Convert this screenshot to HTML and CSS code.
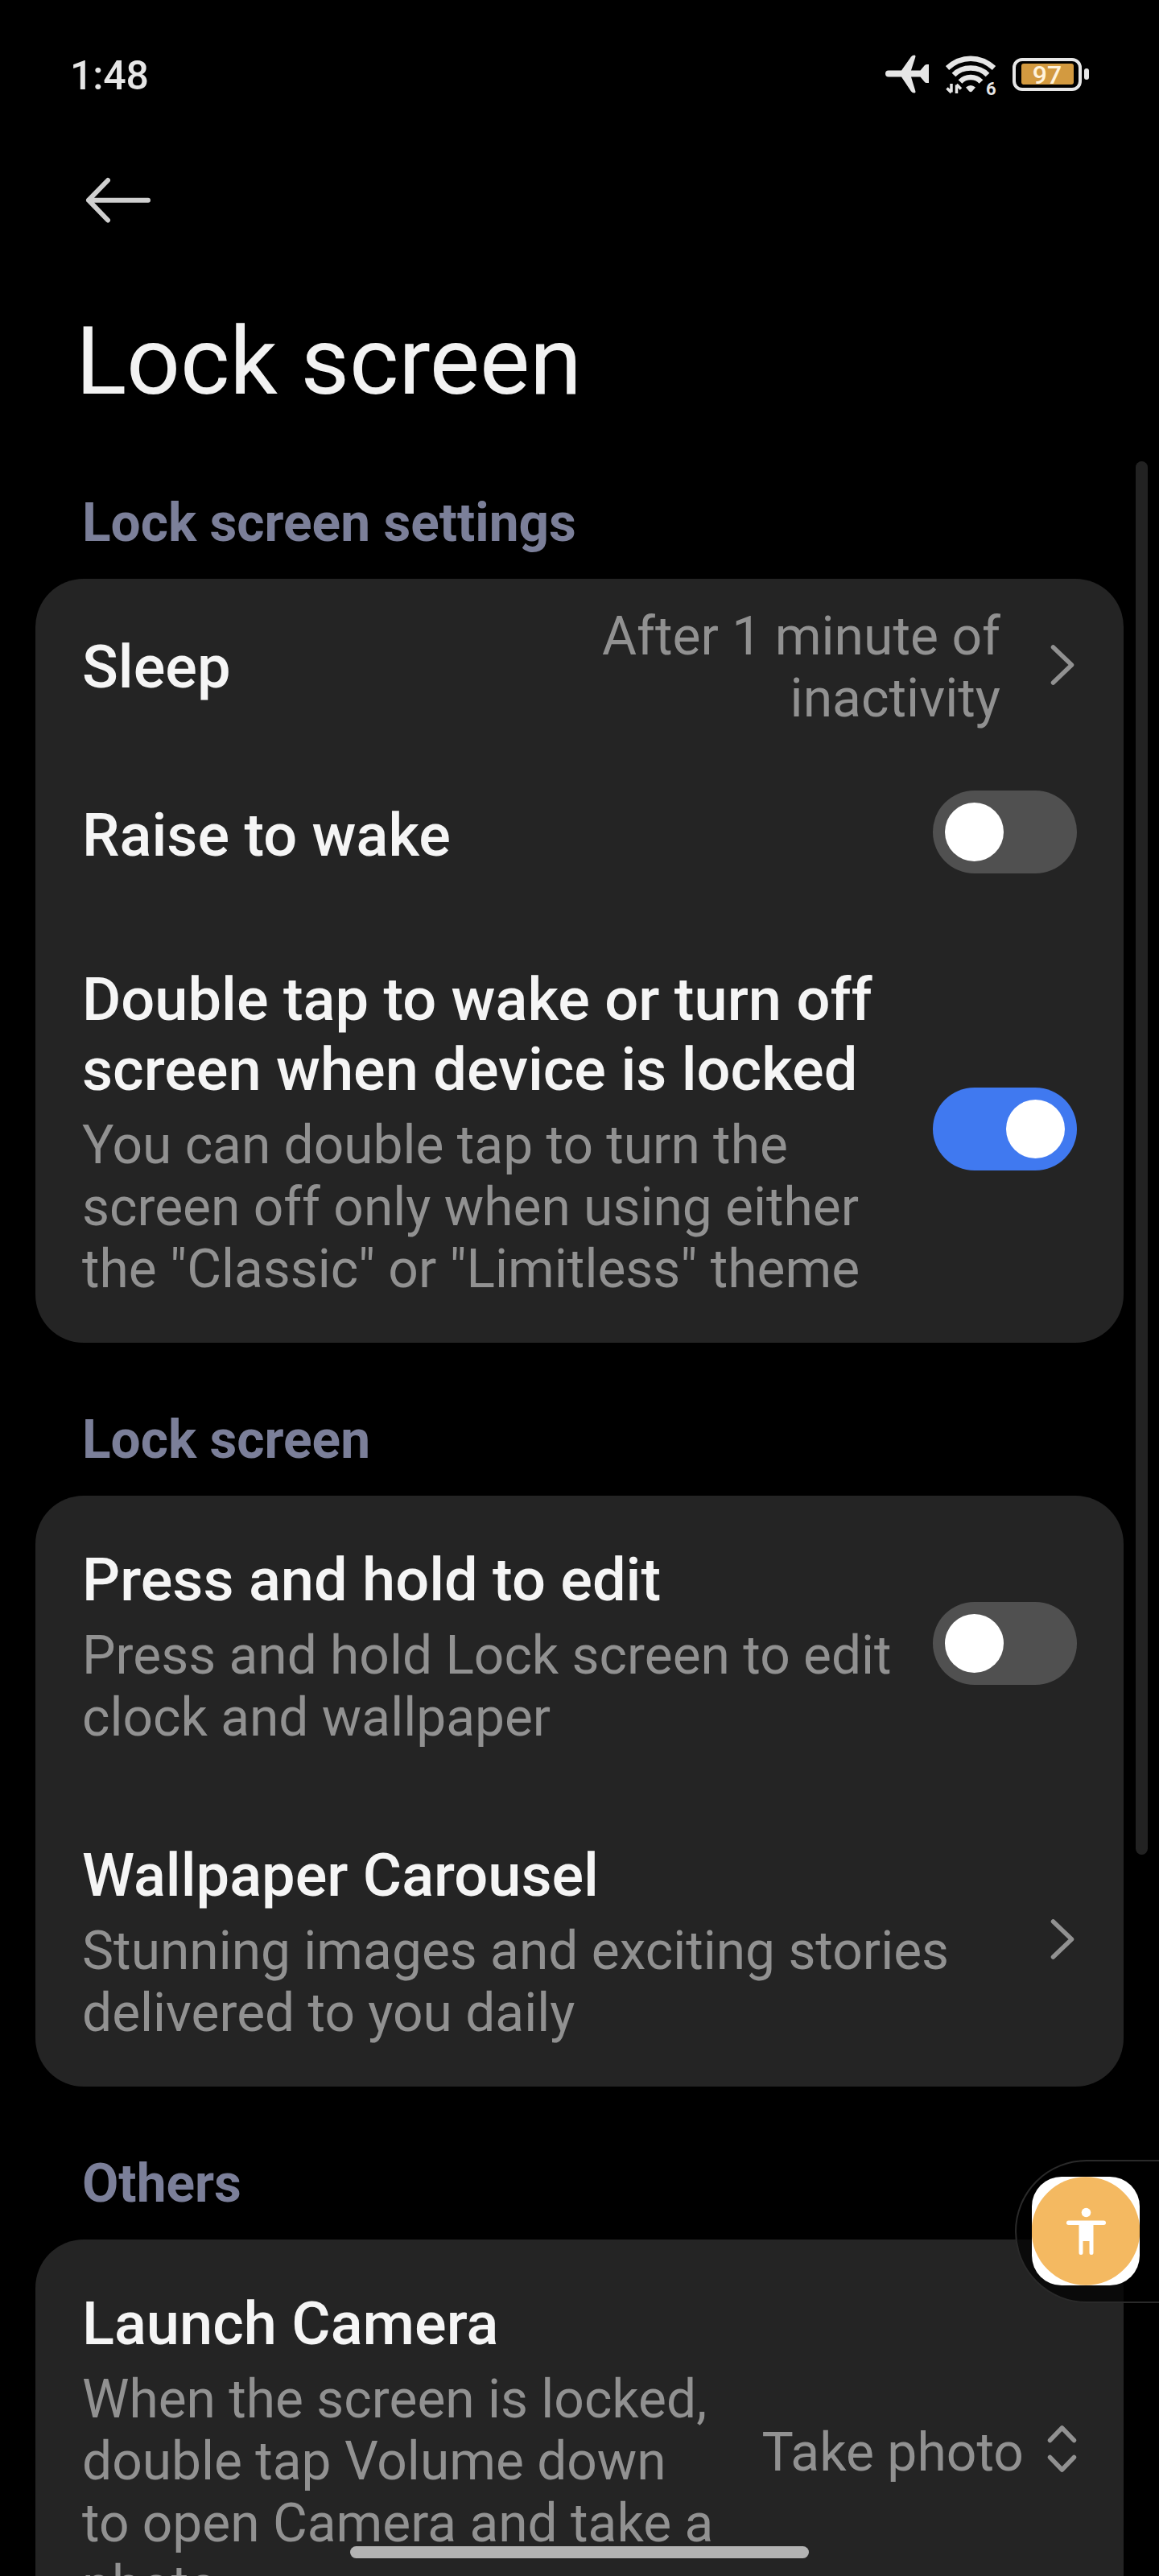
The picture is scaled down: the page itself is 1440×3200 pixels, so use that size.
FILE: index.html
```html
<!DOCTYPE html>
<html lang="en">
  <head>
    <meta charset="UTF-8" />
    <meta name="viewport" content="width=device-width, initial-scale=1.0" />
    <title>Lock screen</title>
    <link rel="stylesheet" href="styles.css">
  </head>
  <body>
    <div class="screen">
      <!-- Status bar -->
      <header class="status-bar">
        <span class="clock">1:48</span>
        <div class="status-icons">
          <svg class="plane" width="54" height="48" viewBox="0 0 54 48" fill="#e6e6e6">
            <path d="M4 19.5H20L32 2.5Q33.5.5 36 .5Q38 .5 37.3 3L32 19.5H43.500L48.500 13.500Q49.500 12 51.500 12H54V35H51.500Q49.500 35 48.500 33.500L43.500 27.500H32L37.300 45Q38 47.500 36 47.500Q33.500 47.500 32 45.500L20 27.500H4A4 4 0 0 1 4 19.500Z" />
          </svg>
          <svg class="wifi" width="64" height="54" viewBox="0 0 64 54">
            <g fill="none" stroke="#e6e6e6" stroke-width="6.500">
              <path d="M2 16.500Q15 4.700 31 4.700T60 16.500" />
              <path d="M10 25Q18 16.500 31 16.500T52 25" />
              <path d="M18 33.500Q23 28 31 28T44 33.500" />
            </g>
            <path d="M25 40.500Q31 35.500 37 40.500L33 45.300Q31 47 29 45.300Z" fill="#e6e6e6" />
            <path d="M7 36V46.500M1.500 41.500L7 47M13.500 48V37.500M19 42.500L13.500 37" fill="none" stroke="#e6e6e6" stroke-width="3.500" />
            <text class="wifi-gen" x="50" y="49.500">6</text>
          </svg>
          <div class="battery">
            <div class="battery-body"><span class="battery-level">97</span></div>
            <i class="battery-tip"></i>
          </div>
        </div>
      </header>

      <!-- Title -->
      <nav class="nav">
        <svg width="82" height="58" viewBox="0 0 82 58" fill="none" stroke="#cfcfcf" stroke-width="6" stroke-linecap="round" stroke-linejoin="round">
          <path d="M29 4L5 28.700L29 53.500M5 28.700H79" />
        </svg>
      </nav>
      <h1 class="page-title">Lock screen</h1>

      <!-- Lock screen settings -->
      <h2 class="section-title">Lock screen settings</h2>
      <section class="card">
        <div class="row row-sleep">
          <h3 class="label">Sleep</h3>
          <p class="value">After 1 minute of<br>inactivity</p>
          <svg class="chevron" width="30" height="52" viewBox="0 0 30 52"><path d="M3.500 4L26.500 26L3.500 48" /></svg>
        </div>
        <div class="row row-single">
          <h3 class="label">Raise to wake</h3>
          <span class="toggle"></span>
        </div>
        <div class="row">
          <div class="text">
            <h3 class="label">Double tap to wake or turn off<br>screen when device is locked</h3>
            <p class="summary">You can double tap to turn the<br>screen off only when using either<br>the "Classic" or "Limitless" theme</p>
          </div>
          <span class="toggle on"></span>
        </div>
      </section>

      <!-- Lock screen -->
      <h2 class="section-title">Lock screen</h2>
      <section class="card">
        <div class="row">
          <div class="text">
            <h3 class="label">Press and hold to edit</h3>
            <p class="summary">Press and hold Lock screen to edit<br>clock and wallpaper</p>
          </div>
          <span class="toggle"></span>
        </div>
        <div class="row">
          <div class="text">
            <h3 class="label">Wallpaper Carousel</h3>
            <p class="summary">Stunning images and exciting stories<br>delivered to you daily</p>
          </div>
          <svg class="chevron" width="30" height="52" viewBox="0 0 30 52"><path d="M3.500 4L26.500 26L3.500 48" /></svg>
        </div>
      </section>

      <!-- Others -->
      <h2 class="section-title">Others</h2>
      <section class="card">
        <div class="row">
          <div class="text">
            <h3 class="label">Launch Camera</h3>
            <p class="summary">When the screen is locked,<br>double tap Volume down<br>to open Camera and take a<br>photo</p>
          </div>
          <p class="value value-select">Take photo</p>
          <svg class="updown" width="37" height="60" viewBox="0 0 37 60"><path d="M3.500 19.500L18.500 4L33.500 19.500M3.500 40.500L18.500 56L33.500 40.500" /></svg>
        </div>
      </section>

      <!-- Overlays -->
      <div class="scrollbar"></div>
      <div class="floating">
        <div class="floating-button">
          <svg width="134" height="135" viewBox="0 0 134 135">
            <circle cx="67" cy="67.500" r="67.300" fill="#f4b961" />
            <g fill="#fff">
              <circle cx="67.500" cy="44.500" r="5.800" />
              <rect x="43" y="54.500" width="49" height="5.500" rx="2.700" />
              <path d="M58.500 57H76.500V94.500A2.500 2.500 0 0 1 71.500 94.500V80H63.500V94.500A2.500 2.500 0 0 1 58.500 94.500Z" />
            </g>
          </svg>
        </div>
      </div>
      <div class="home-bar"></div>
    </div>
  </body>
</html>
```
FILE: styles.css
```css
* {
  box-sizing: border-box;
}

body {
  margin: 0;
  background: #000;
  font-family: Roboto, sans-serif;
}

h1,
h2,
h3,
p {
  margin: 0;
}

.screen {
  position: relative;
  width: 1440px;
  height: 3200px;
  overflow: hidden;
  background: #000;
}

/* Status bar */
.status-bar {
  display: flex;
  justify-content: space-between;
  align-items: center;
  height: 184px;
  padding: 0 87px 0 87px;
}

.clock {
  padding-top: 4px;
  font-size: 50px;
  font-weight: 500;
  line-height: 60px;
  letter-spacing: -0.2px;
  color: #e6e6e6;
}

.status-icons {
  display: flex;
  align-items: center;
}

.wifi {
  margin: 6px 19px 0 21px;
}

.wifi-gen {
  font-size: 22px;
  font-weight: 700;
  fill: #e6e6e6;
}

.battery {
  display: flex;
  align-items: center;
  gap: 3px;
}

.battery-body {
  width: 86px;
  height: 41px;
  padding: 3px 5px;
  border: 4px solid #e6e6e6;
  border-radius: 12px;
}

.battery-level {
  display: block;
  width: 65px;
  height: 26px;
  margin: 0 auto;
  border-radius: 3px;
  background: #d39a40;
  color: #fff3dc;
  font-size: 32px;
  font-weight: 500;
  line-height: 28px;
  text-align: center;
}

.battery-tip {
  width: 6px;
  height: 14px;
  border-radius: 3px;
  background: #e6e6e6;
}

/* Page header */
.nav {
  height: 196px;
  padding: 36px 0 0 105px;
}

.nav svg,
.floating-button svg {
  display: block;
}

.page-title {
  padding-left: 94px;
  font-size: 117.5px;
  font-weight: 400;
  line-height: 138px;
  letter-spacing: -0.2px;
  color: #f2f2f2;
}

.section-title {
  padding: 82px 0 30px 102px;
  font-size: 65.8px;
  font-weight: 700;
  line-height: 78px;
  color: #7b7f99;
}

.page-title + .section-title {
  padding-top: 93px;
}

/* Cards */
.card {
  margin: 0 44px;
  border-radius: 60px;
  background: #242424;
}

.row {
  display: flex;
  align-items: center;
  justify-content: space-between;
  padding: 61px 58px 53px;
}

.row-sleep {
  height: 214px;
  padding: 5px 58px 0;
}

.row-single {
  height: 204px;
  padding: 4px 58px 0;
}

.label {
  font-size: 74px;
  font-weight: 500;
  line-height: 87px;
  color: #f5f5f5;
}

.summary {
  margin-top: 12px;
  font-size: 65.85px;
  line-height: 77px;
  color: #919191;
}

.value {
  margin-left: auto;
  font-size: 66px;
  line-height: 77px;
  text-align: right;
  color: #919191;
}

.value-select {
  margin-right: 29px;
}

.chevron,
.updown {
  flex: none;
  fill: none;
  stroke: #919191;
  stroke-width: 5.5;
  stroke-linecap: round;
  stroke-linejoin: round;
}

.chevron {
  margin-right: 3px;
  margin-bottom: 7px;
}

.updown {
  margin-bottom: 10px;
}

.row-sleep .chevron {
  margin-bottom: 5px;
  margin-left: 62px;
}

.toggle {
  flex: none;
  display: flex;
  width: 179px;
  height: 103px;
  margin-bottom: 8px;
  padding: 15px;
  border-radius: 52px;
  background: #505050;
}

.toggle::before {
  content: "";
  width: 73px;
  height: 73px;
  border-radius: 50%;
  background: #fff;
}

.toggle.on {
  justify-content: flex-end;
  background: #4079f0;
}

/* Overlays */
.scrollbar {
  position: absolute;
  top: 573px;
  left: 1411px;
  width: 15px;
  height: 1731px;
  border-radius: 8px;
  background: #222;
}

.floating {
  position: absolute;
  top: 2683px;
  right: -3px;
  width: 182px;
  height: 178px;
  padding: 19px;
  border: 2px solid #2a2a2a;
  border-radius: 89px 0 0 89px;
  background: rgba(0, 0, 0, 0.7);
}

.floating-button {
  width: 134px;
  height: 135px;
  border-radius: 37px;
  overflow: hidden;
  background: #fff;
}

.home-bar {
  position: absolute;
  top: 3163px;
  left: 435px;
  width: 570px;
  height: 15px;
  border-radius: 8px;
  background: #b3b3b3;
}
```
